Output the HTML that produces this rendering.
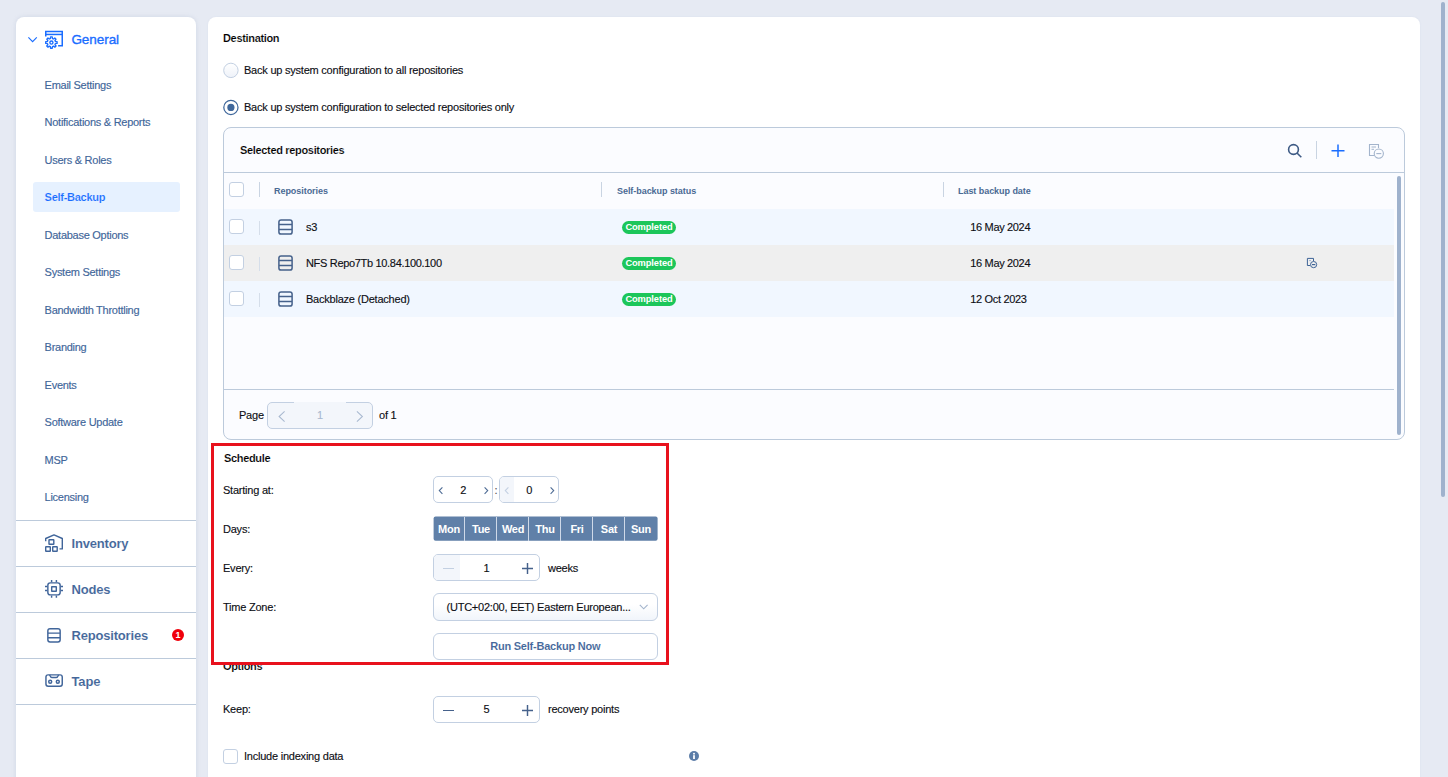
<!DOCTYPE html>
<html lang="en">
<head>
<meta charset="utf-8">
<title>Self-Backup</title>
<style>
*{box-sizing:border-box;margin:0;padding:0}
html,body{width:1448px;height:777px;overflow:hidden}
body{background:#e6eaf3;font-family:"Liberation Sans",sans-serif;font-size:12px;color:#111;position:relative}
.abs{position:absolute}
.t{position:absolute;white-space:nowrap;line-height:14px}
/* sidebar */
#side{position:absolute;left:16px;top:17px;width:180px;height:770px;background:#fff;border-radius:8px 8px 0 0;box-shadow:0 0 4px rgba(150,165,195,.28)}
#side .it{position:absolute;left:28.6px;color:#41669a;-webkit-text-stroke:.15px currentColor;font-size:11px;letter-spacing:-.27px;line-height:14px;white-space:nowrap}
#side .sel{position:absolute;left:17px;top:165px;width:147px;height:30px;background:#e6f1ff;border-radius:3px}
#side .hd{position:absolute;left:55.6px;-webkit-text-stroke:.08px #fff;font-weight:bold;font-size:13px;letter-spacing:-.2px;line-height:16px;color:#44679a;white-space:nowrap}
#side .ln{position:absolute;left:0;width:180px;height:1px;background:#bccadb}
#side svg{position:absolute}
/* main */
#main{position:absolute;left:208px;top:17px;width:1212px;height:770px;background:#fff;border-radius:8px 8px 0 0;box-shadow:0 0 2px rgba(150,165,195,.12)}
.cb{position:absolute;width:15px;height:15px;border:1px solid #c3d0e2;border-radius:3px;background:#fff}
#grid{position:absolute;left:223px;top:127px;width:1182px;height:313px;border:1px solid #bccadb;border-radius:8px;background:#fbfcff;overflow:hidden}
.badge{position:absolute;width:54px;height:12.5px;border-radius:7px;background:#1cc65a;color:#fff;font-weight:bold;font-size:9.3px;line-height:12.5px;text-align:center;letter-spacing:-.1px}
.colsep{position:absolute;width:1px;background:#c9d4e2}
.th{position:absolute;font-size:9px;font-weight:bold;color:#4a6a94;line-height:12px;white-space:nowrap;letter-spacing:-.05px}
.box{position:absolute;border:1px solid #c3d0e2;border-radius:5px;background:#fff}

#c{position:absolute;left:0;top:0;width:1448px;height:777px}
#c .t{font-size:11px;letter-spacing:-.225px;color:#0d0e14;-webkit-text-stroke:.13px currentColor}
#c .b{font-weight:bold;letter-spacing:-.33px;-webkit-text-stroke:.16px #fff;color:#000}
.repo{position:absolute}
.chev{position:absolute}

.day{position:absolute;top:516.5px;width:31px;height:24.5px;color:#fff;font-weight:bold;font-size:11px;letter-spacing:-.27px;line-height:24.5px;text-align:center}
</style>
</head>
<body>
<div id="side">
<svg style="left:11px;top:19px" width="12" height="8" viewBox="0 0 12 8"><path d="M1.4 1.3 L5.6 5.6 L9.8 1.3" fill="none" stroke="#1a6dff" stroke-width="1.15"/></svg>
<svg style="left:24px;top:8px" width="30" height="30" viewBox="0 0 30 30" fill="none" stroke="#1a6dff" stroke-width="1.5" stroke-linejoin="round"><path d="M5.75 11.6V6.55H22.25V20.85H18.1" stroke-linejoin="miter"/><path d="M5.75 9.45H22.25"/><path d="M10.33 13.54 L10.55 11.86 L12.25 11.86 L12.47 13.54 L13.48 13.96 L14.82 12.93 L16.02 14.13 L14.99 15.48 L15.41 16.48 L17.09 16.70 L17.09 18.40 L15.41 18.62 L14.99 19.62 L16.02 20.97 L14.82 22.17 L13.48 21.14 L12.47 21.56 L12.25 23.24 L10.55 23.24 L10.33 21.56 L9.33 21.14 L7.98 22.17 L6.78 20.97 L7.81 19.62 L7.39 18.62 L5.71 18.40 L5.71 16.70 L7.39 16.48 L7.81 15.47 L6.78 14.13 L7.98 12.93 L9.32 13.96Z" stroke-width="1.35"/><circle cx="11.4" cy="17.55" r="1.55" stroke-width="1.35"/></svg>
<div class="hd" style="top:14.8px;left:55.4px;color:#1a6dff;font-weight:normal;font-size:13.5px;letter-spacing:-.05px;-webkit-text-stroke:.35px #1a6dff">General</div>
<div class="sel"></div>
<div class="it" style="top:61px">Email Settings</div>
<div class="it" style="top:98px">Notifications &amp; Reports</div>
<div class="it" style="top:136px">Users &amp; Roles</div>
<div class="it" style="top:173px;color:#1a6dff;font-weight:bold;-webkit-text-stroke:.16px #e6f1ff">Self-Backup</div>
<div class="it" style="top:211px">Database Options</div>
<div class="it" style="top:248px">System Settings</div>
<div class="it" style="top:286px">Bandwidth Throttling</div>
<div class="it" style="top:323px">Branding</div>
<div class="it" style="top:361px">Events</div>
<div class="it" style="top:398px">Software Update</div>
<div class="it" style="top:436px">MSP</div>
<div class="it" style="top:473px">Licensing</div>
<div class="ln" style="top:503px"></div>
<div class="ln" style="top:549px"></div>
<div class="ln" style="top:595px"></div>
<div class="ln" style="top:641px"></div>
<div class="ln" style="top:687px"></div>
<svg style="left:24px;top:511px" width="30" height="30" viewBox="0 0 30 30" fill="none" stroke="#40659a" stroke-width="1.4"><path d="M5.7 13.3V10.5L14 6.9L22.3 10.5V20.9H19.5" stroke-linejoin="round"/><rect x="9" y="11.7" width="4.8" height="4.6" rx=".4"/><rect x="5.7" y="18.7" width="4.6" height="4.6" rx=".4"/><rect x="12.7" y="18.7" width="4.5" height="4.6" rx=".4"/></svg><svg style="left:24px;top:557px" width="30" height="30" viewBox="0 0 30 30" fill="none" stroke="#40659a" stroke-width="1.45"><rect x="7.85" y="8.85" width="12.3" height="12" rx="2.4"/><rect x="11.7" y="12.7" width="4.6" height="4.6" rx=".2"/><path d="M11.6 6V8.2M16.4 6V8.2M11.6 21.5V23.7M16.4 21.5V23.7M5 12.5H7.2M5 16.4H7.2M20.8 12.5H23M20.8 16.4H23"/></svg><svg style="left:24px;top:603px" width="30" height="30" viewBox="0 0 30 30" fill="none" stroke="#40659a" stroke-width="1.45"><rect x="7.85" y="8.65" width="12.3" height="13.4" rx="2.2"/><path d="M7.9 13.1H20.1M7.9 17.8H20.1"/></svg><svg style="left:24px;top:649px" width="30" height="30" viewBox="0 0 30 30" fill="none" stroke="#40659a" stroke-width="1.45"><rect x="5.95" y="8.85" width="16.3" height="11.3" rx="2.2"/><path d="M9.6 8.9C10.2 10.3 10.6 11.5 12.2 11.5H16C17.6 11.5 18 10.3 18.6 8.9"/><circle cx="10.2" cy="15.75" r="1.5"/><circle cx="17.8" cy="15.75" r="1.5"/></svg>
<div class="hd" style="top:518.8px">Inventory</div>
<div class="hd" style="top:564.8px">Nodes</div>
<div class="hd" style="top:610.8px">Repositories</div>
<div class="hd" style="top:656.8px">Tape</div>
<div class="abs" style="left:156px;top:612px;width:12px;height:12px;border-radius:50%;background:#f0000c;color:#fff;font-size:9px;font-weight:bold;line-height:12px;text-align:center">1</div>
</div>
<div id="main"></div>
<div id="c">
<div class="t b" style="left:223px;top:31px">Destination</div>
<svg class="abs" style="left:221px;top:60px" width="20" height="20" viewBox="0 0 20 20"><defs><linearGradient id="rg" x1="0" y1="0" x2="0" y2="1"><stop offset="0" stop-color="#ffffff"/><stop offset="1" stop-color="#eef2f9"/></linearGradient></defs><circle cx="9.9" cy="10.4" r="7.2" fill="url(#rg)" stroke="#c3d0e2" stroke-width="1"/></svg>
<div class="t" style="left:244px;top:63px">Back up system configuration to all repositories</div>
<svg class="abs" style="left:221px;top:97px" width="20" height="20" viewBox="0 0 20 20"><circle cx="9.9" cy="10.4" r="7.1" fill="#fff" stroke="#3f679b" stroke-width="1.25"/><circle cx="9.9" cy="10.4" r="3.6" fill="#3f679b"/></svg>
<div class="t" style="left:244px;top:100px">Back up system configuration to selected repositories only</div>
<div id="grid"></div>
<div class="t b" style="left:240px;top:143px">Selected repositories</div>
<div class="abs" style="left:224px;top:172px;width:1180px;height:1px;background:#bccadb"></div>
<svg class="abs" style="left:1286px;top:142px" width="18" height="18" viewBox="0 0 18 18" fill="none" stroke="#3d5a85" stroke-width="1.6"><circle cx="7.5" cy="7.5" r="4.9"/><path d="M11 11 L15.3 15.3"/></svg>
<div class="abs" style="left:1316px;top:141px;width:1px;height:18px;background:#c9d4e2"></div>
<svg class="abs" style="left:1331px;top:144px" width="14" height="14" viewBox="0 0 14 14" fill="none" stroke="#1a6dff" stroke-width="1.5"><path d="M7 0.5V13M0.5 6.7H13.5"/></svg>
<svg class="abs" style="left:1368px;top:143px" width="18" height="17" viewBox="0 0 18 17" fill="none" stroke="#a3b4cc" stroke-width="1.1"><path d="M6 12.5H1.5V1.5H10.5V5"/><path d="M3.5 4H8M3.5 6.3H6" stroke-width="1"/><circle cx="10.8" cy="10.6" r="4.6" fill="#fbfcff"/><path d="M8.3 10.6H13.3"/></svg>
<div class="cb" style="left:229px;top:182px"></div>
<div class="colsep" style="left:259px;top:182px;height:15px"></div>
<div class="colsep" style="left:601px;top:182px;height:15px"></div>
<div class="colsep" style="left:943px;top:182px;height:15px"></div>
<div class="th" style="left:274px;top:185px">Repositories</div>
<div class="th" style="left:617px;top:185px">Self-backup status</div>
<div class="th" style="left:958px;top:185px">Last backup date</div>
<div class="abs" style="left:224px;top:209px;width:1170px;height:36px;background:#f1f7ff"></div>
<div class="cb" style="left:229px;top:219px"></div>
<div class="abs" style="left:259px;top:221px;width:1px;height:14px;background:#d5deea"></div>
<svg class="repo" style="left:278px;top:219px" width="15" height="16" viewBox="0 0 15 16" fill="none" stroke="#45618b" stroke-width="1.5"><rect x="0.9" y="0.9" width="13.2" height="14.2" rx="2.2"/><path d="M1 5.6H14M1 10.4H14"/></svg>
<div class="t" style="left:306px;top:220px">s3</div>
<div class="badge" style="left:622px;top:221px">Completed</div>
<div class="t" style="left:970.3px;top:220px;letter-spacing:-.34px">16 May 2024</div>
<div class="abs" style="left:224px;top:245px;width:1170px;height:36px;background:#efefef"></div>
<div class="cb" style="left:229px;top:255px"></div>
<div class="abs" style="left:259px;top:257px;width:1px;height:14px;background:#d5deea"></div>
<svg class="repo" style="left:278px;top:255px" width="15" height="16" viewBox="0 0 15 16" fill="none" stroke="#45618b" stroke-width="1.5"><rect x="0.9" y="0.9" width="13.2" height="14.2" rx="2.2"/><path d="M1 5.6H14M1 10.4H14"/></svg>
<div class="t" style="left:306px;top:256px;letter-spacing:-.32px">NFS Repo7Tb 10.84.100.100</div>
<div class="badge" style="left:622px;top:257px">Completed</div>
<div class="t" style="left:970.3px;top:256px;letter-spacing:-.34px">16 May 2024</div>
<div class="abs" style="left:224px;top:281px;width:1170px;height:36px;background:#f1f7ff"></div>
<div class="cb" style="left:229px;top:291px"></div>
<div class="abs" style="left:259px;top:293px;width:1px;height:14px;background:#d5deea"></div>
<svg class="repo" style="left:278px;top:291px" width="15" height="16" viewBox="0 0 15 16" fill="none" stroke="#45618b" stroke-width="1.5"><rect x="0.9" y="0.9" width="13.2" height="14.2" rx="2.2"/><path d="M1 5.6H14M1 10.4H14"/></svg>
<div class="t" style="left:306px;top:292px">Backblaze (Detached)</div>
<div class="badge" style="left:622px;top:293px">Completed</div>
<div class="t" style="left:970.3px;top:292px;letter-spacing:-.34px">12 Oct 2023</div>

<svg class="abs" style="left:1305px;top:256px" width="14" height="13" viewBox="0 0 14 13" fill="none" stroke="#3d6396" stroke-width="1"><path d="M5 9.5H2.4V2.4H8.5V5"/><path d="M4 4.6H6" stroke-width=".8" stroke="#8fa6c6"/><circle cx="8.6" cy="8.6" r="3.1" fill="#efefef"/><path d="M6.9 8.6H10.3" stroke-width="1.2"/></svg>
<div class="abs" style="left:1397px;top:176px;width:4px;height:259px;border-radius:2px;background:#9fb2cd"></div>
<div class="abs" style="left:224px;top:389px;width:1170px;height:1px;background:#bccadb"></div>
<div class="t" style="left:239px;top:408px">Page</div>
<div class="box" style="left:267px;top:402px;width:106px;height:27px;background:#f3f6fb"></div>
<div class="abs" style="left:294px;top:402px;width:52px;height:2px;background:#f3f6fb"></div>
<svg class="chev" style="left:277px;top:410px" width="9" height="13" viewBox="0 0 9 13" fill="none" stroke="#a9b9d0" stroke-width="1.05"><path d="M7.6 1.4L2.1 6.5L7.6 11.6"/></svg>
<svg class="chev" style="left:355px;top:410px" width="9" height="13" viewBox="0 0 9 13" fill="none" stroke="#a9b9d0" stroke-width="1.05"><path d="M1.9 1.4L7.4 6.5L1.9 11.6"/></svg>
<div class="t" style="left:317px;top:408px;color:#a9b9d0">1</div>
<div class="t" style="left:379px;top:408px">of 1</div>

<div class="t b" style="left:223px;top:659px">Options</div>
<div class="abs" style="left:211px;top:443px;width:458px;height:222px;border:3px solid #e8111d;background:#fff"></div>
<div class="t b" style="left:224px;top:451px">Schedule</div>
<div class="t" style="left:223px;top:483px">Starting at:</div>
<div class="t" style="left:223px;top:522px">Days:</div>
<div class="t" style="left:223px;top:561px">Every:</div>
<div class="t" style="left:223px;top:600px">Time Zone:</div>
<div class="box" style="left:433px;top:476px;width:60px;height:27px"></div>
<svg class="chev" style="left:437.5px;top:486px" width="6" height="9" viewBox="0 0 6 9" fill="none" stroke="#4d6b94" stroke-width="1.1"><path d="M4.4 1.4L1.3 4.6L4.4 7.8"/></svg><svg class="chev" style="left:482.5px;top:486px" width="6" height="9" viewBox="0 0 6 9" fill="none" stroke="#4d6b94" stroke-width="1.1"><path d="M1.6 1.4L4.7 4.6L1.6 7.8"/></svg>
<div class="t" style="left:460.2px;top:483px">2</div>
<div class="t" style="left:494.5px;top:483px;color:#555">:</div>
<div class="box" style="left:499px;top:476px;width:60px;height:27px;overflow:hidden"><div class="abs" style="left:0;top:0;width:14px;height:27px;background:#f3f6fb"></div></div>
<svg class="chev" style="left:503.5px;top:486px" width="6" height="9" viewBox="0 0 6 9" fill="none" stroke="#c3d0e2" stroke-width="1.1"><path d="M4.4 1.4L1.3 4.6L4.4 7.8"/></svg><svg class="chev" style="left:548.5px;top:486px" width="6" height="9" viewBox="0 0 6 9" fill="none" stroke="#4d6b94" stroke-width="1.1"><path d="M1.6 1.4L4.7 4.6L1.6 7.8"/></svg>
<div class="t" style="left:526.2px;top:483px">0</div>
<svg class="abs" style="left:433px;top:516px" width="226" height="26" viewBox="0 0 226 26"><rect x=".6" y=".45" width="224" height="24.4" rx="2" fill="#6080a8"/></svg>
<div class="day" style="left:433.5px">Mon</div>
<div class="day" style="left:465.5px">Tue</div>
<div class="day" style="left:497.5px">Wed</div>
<div class="day" style="left:529.5px">Thu</div>
<div class="day" style="left:561.5px">Fri</div>
<div class="day" style="left:593.5px">Sat</div>
<div class="day" style="left:625.5px">Sun</div>
<div class="abs" style="left:464px;top:517px;width:1px;height:24px;background:#cfd9e8"></div>
<div class="abs" style="left:496px;top:517px;width:1px;height:24px;background:#cfd9e8"></div>
<div class="abs" style="left:528px;top:517px;width:1px;height:24px;background:#cfd9e8"></div>
<div class="abs" style="left:560px;top:517px;width:1px;height:24px;background:#cfd9e8"></div>
<div class="abs" style="left:592px;top:517px;width:1px;height:24px;background:#cfd9e8"></div>
<div class="abs" style="left:624px;top:517px;width:1px;height:24px;background:#cfd9e8"></div>
<div class="box" style="left:433px;top:554px;width:106.5px;height:27px;overflow:hidden"><div class="abs" style="left:0;top:0;width:26px;height:27px;background:#f3f6fb"></div></div>
<div class="abs" style="left:443px;top:567.6px;width:10.5px;height:1.5px;background:#c3d0e2"></div>
<div class="t" style="left:483.5px;top:561px">1</div>
<svg class="abs" style="left:522px;top:563px" width="11" height="11" viewBox="0 0 11 11" fill="none" stroke="#45618b" stroke-width="1.45"><path d="M5.5 0V11M0 5.5H11"/></svg>
<div class="t" style="left:548px;top:561px">weeks</div>
<div class="box" style="left:433px;top:593px;width:224.5px;height:28px;border-radius:6px;background:linear-gradient(#fff 40%,#f1f5fb)"></div>
<div class="t" style="left:446.5px;top:600px">(UTC+02:00, EET) Eastern European...</div>
<svg class="abs" style="left:639px;top:604px" width="10" height="6" viewBox="0 0 10 6" fill="none" stroke="#a3b4cc" stroke-width="1.1"><path d="M0.8 0.8L4.7 4.8L8.6 0.8"/></svg>
<div class="box" style="left:433px;top:633px;width:224.5px;height:27px;border-radius:6px"></div>
<div class="t b" style="left:433px;top:639px;width:224.5px;text-align:center;color:#44679a;letter-spacing:-.22px;-webkit-text-stroke:.08px #fff">Run Self-Backup Now</div>
<div class="t" style="left:223px;top:702px">Keep:</div>
<div class="box" style="left:433px;top:696px;width:106.5px;height:27px"></div>
<div class="abs" style="left:443px;top:709.8px;width:10.5px;height:1.5px;background:#45618b"></div>
<div class="t" style="left:483.5px;top:702px">5</div>
<svg class="abs" style="left:522px;top:705px" width="11" height="11" viewBox="0 0 11 11" fill="none" stroke="#45618b" stroke-width="1.45"><path d="M5.5 0V11M0 5.5H11"/></svg>
<div class="t" style="left:548px;top:702px">recovery points</div>
<div class="cb" style="left:223px;top:748.5px"></div>
<div class="t" style="left:244px;top:749px">Include indexing data</div>
<svg class="abs" style="left:689px;top:751px" width="10" height="10" viewBox="0 0 10 10"><circle cx="5" cy="5" r="5" fill="#5c7da8"/><rect x="4.1" y="4.2" width="1.8" height="3.8" fill="#fff"/><rect x="4.1" y="1.9" width="1.8" height="1.6" fill="#fff"/></svg>
<div class="abs" style="left:1441px;top:2px;width:4px;height:495px;border-radius:2px;background:#9fb2cd"></div>
</div>
</body>
</html>
